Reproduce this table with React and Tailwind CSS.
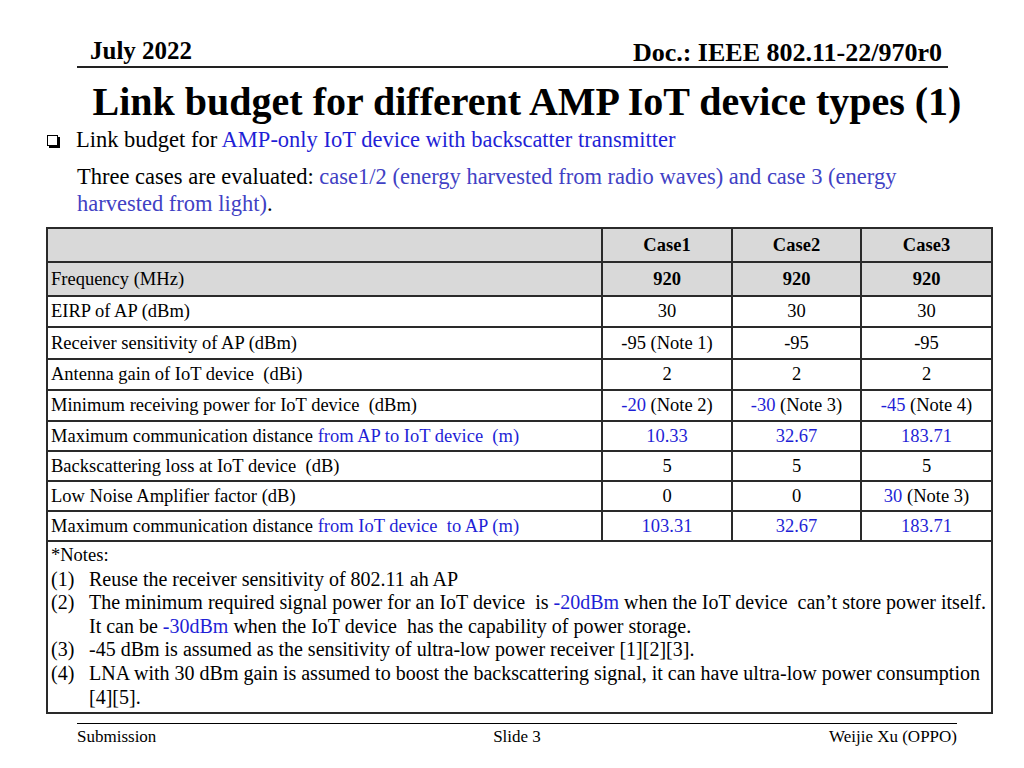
const rows = [
  { label: 'EIRP of AP (dBm)', cells: [['30'], ['30'], ['30']], h: 'h-[31px]' },
  { label: 'Receiver sensitivity of AP (dBm)', cells: [['-95 (Note 1)'], ['-95'], ['-95']], h: 'h-[32px]' },
  { label: 'Antenna gain of IoT device  (dBi)', cells: [['2'], ['2'], ['2']], h: 'h-[31px]' },
  {
    label: 'Minimum receiving power for IoT device  (dBm)',
    cells: [['-20', ' (Note 2)'], ['-30', ' (Note 3)'], ['-45', ' (Note 4)']],
    h: 'h-[31px]'
  },
  {
    label: 'Maximum communication distance ',
    blue: 'from AP to IoT device  (m)',
    cells: [['10.33', ''], ['32.67', ''], ['183.71', '']],
    h: 'h-[30px]'
  },
  { label: 'Backscattering loss at IoT device  (dB)', cells: [['5'], ['5'], ['5']], h: 'h-[30px]' },
  { label: 'Low Noise Amplifier factor (dB)', cells: [['0'], ['0'], ['30', ' (Note 3)']], h: 'h-[30px]' },
  {
    label: 'Maximum communication distance ',
    blue: 'from IoT device  to AP (m)',
    cells: [['103.31', ''], ['32.67', ''], ['183.71', '']],
    h: 'h-[30px]'
  }
]

function Cell({ parts }) {
  // one part = plain black, [value, ''] = all blue, [value, note] = blue value + black note
  if (parts.length === 1) return <span>{parts[0]}</span>
  if (parts[1] === '') return <span className="text-[#1f1fd6]">{parts[0]}</span>
  return (
    <span>
      <span className="text-[#1f1fd6]">{parts[0]}</span>
      {parts[1]}
    </span>
  )
}

export default function App() {
  return (
    <div
      className="w-[1024px] h-[768px] bg-white text-black relative overflow-hidden"
      style={{ fontFamily: '"Liberation Serif", "Times New Roman", serif' }}
    >
      {/* Header */}
      <div className="pt-[36px] pl-[90px] pr-[82px] flex justify-between items-end font-bold leading-[30px]">
        <span className="text-[25px]">July 2022</span>
        <span className="text-[26px] translate-y-[2px]">Doc.: IEEE 802.11-22/970r0</span>
      </div>
      <div className="ml-[77px] w-[871px] h-[2px] bg-[#222]" />

      {/* Title */}
      <h1 className="text-center font-bold text-[40px] leading-[46px] mt-[11px] pl-[30px] whitespace-nowrap">
        Link budget for different AMP IoT device types (1)
      </h1>

      {/* Bullets */}
      <div className="mt-[1px] pl-[47px] flex items-center gap-[18px] text-[22.5px] leading-[28px]">
        <span className="w-[11px] h-[11px] border-[1.5px] border-black shadow-[2px_2px_0_0_#000] shrink-0" />
        <span>
          Link budget for <span className="text-[#1f1fd6]">AMP-only IoT device with backscatter transmitter</span>
        </span>
      </div>
      <p className="mt-[9px] ml-[77px] w-[860px] text-[22.5px] leading-[27px]">
        Three cases are evaluated:{' '}
        <span className="text-[#4141c4]">
          case1/2 (energy harvested from radio waves) and case 3 (energy harvested from light)
        </span>
        .
      </p>

      {/* Table */}
      <table className="ml-[46px] mt-[10px] w-[945px] border-collapse text-[18.5px] leading-[21px] table-fixed">
        <colgroup>
          <col className="w-[555px]" />
          <col className="w-[130px]" />
          <col className="w-[129px]" />
          <col className="w-[131px]" />
        </colgroup>
        <tbody>
          <tr className="h-[34px] bg-[#d9d9d9] font-bold">
            <td className="border-2 border-[#2a2a2a]" />
            <td className="border-2 border-[#2a2a2a] text-center">Case1</td>
            <td className="border-2 border-[#2a2a2a] text-center">Case2</td>
            <td className="border-2 border-[#2a2a2a] text-center">Case3</td>
          </tr>
          <tr className="h-[34px] bg-[#d9d9d9]">
            <td className="border-2 border-[#2a2a2a] px-[3px]">Frequency (MHz)</td>
            <td className="border-2 border-[#2a2a2a] text-center font-bold">920</td>
            <td className="border-2 border-[#2a2a2a] text-center font-bold">920</td>
            <td className="border-2 border-[#2a2a2a] text-center font-bold">920</td>
          </tr>
          {rows.map((r, i) => (
            <tr key={i} className={r.h}>
              <td className="border-2 border-[#2a2a2a] px-[3px] whitespace-pre">
                {r.label}
                {r.blue && <span className="text-[#1f1fd6]">{r.blue}</span>}
              </td>
              {r.cells.map((c, j) => (
                <td key={j} className="border-2 border-[#2a2a2a] text-center whitespace-pre">
                  <Cell parts={c} />
                </td>
              ))}
            </tr>
          ))}
          <tr>
            <td colSpan={4} className="border-2 border-[#2a2a2a] px-[3px] pt-[2px] pb-[3px] leading-[23.6px] align-top">
              <div>*Notes:</div>
              <div className="grid grid-cols-[38px_1fr] text-[20px] whitespace-pre">
                <span>(1)</span>
                <span>Reuse the receiver sensitivity of 802.11 ah AP</span>
                <span>(2)</span>
                <span>
                  The minimum required signal power for an IoT device  is{' '}
                  <span className="text-[#1f1fd6]">-20dBm</span> when the IoT device  can’t store power itself.
                  <br />
                  It can be <span className="text-[#1f1fd6]">-30dBm</span> when the IoT device  has the capability of power storage.
                </span>
                <span>(3)</span>
                <span>-45 dBm is assumed as the sensitivity of ultra-low power receiver [1][2][3].</span>
                <span>(4)</span>
                <span>
                  LNA with 30 dBm gain is assumed to boost the backscattering signal, it can have ultra-low power consumption
                  <br />
                  [4][5].
                </span>
              </div>
            </td>
          </tr>
        </tbody>
      </table>

      {/* Footer */}
      <div className="absolute left-[77px] top-[723px] w-[880px] border-t-[1.5px] border-black grid grid-cols-3 pt-[3px] text-[17px] leading-[20px]">
        <span>Submission</span>
        <span className="text-center">Slide 3</span>
        <span className="text-right">Weijie Xu (OPPO)</span>
      </div>
    </div>
  )
}
